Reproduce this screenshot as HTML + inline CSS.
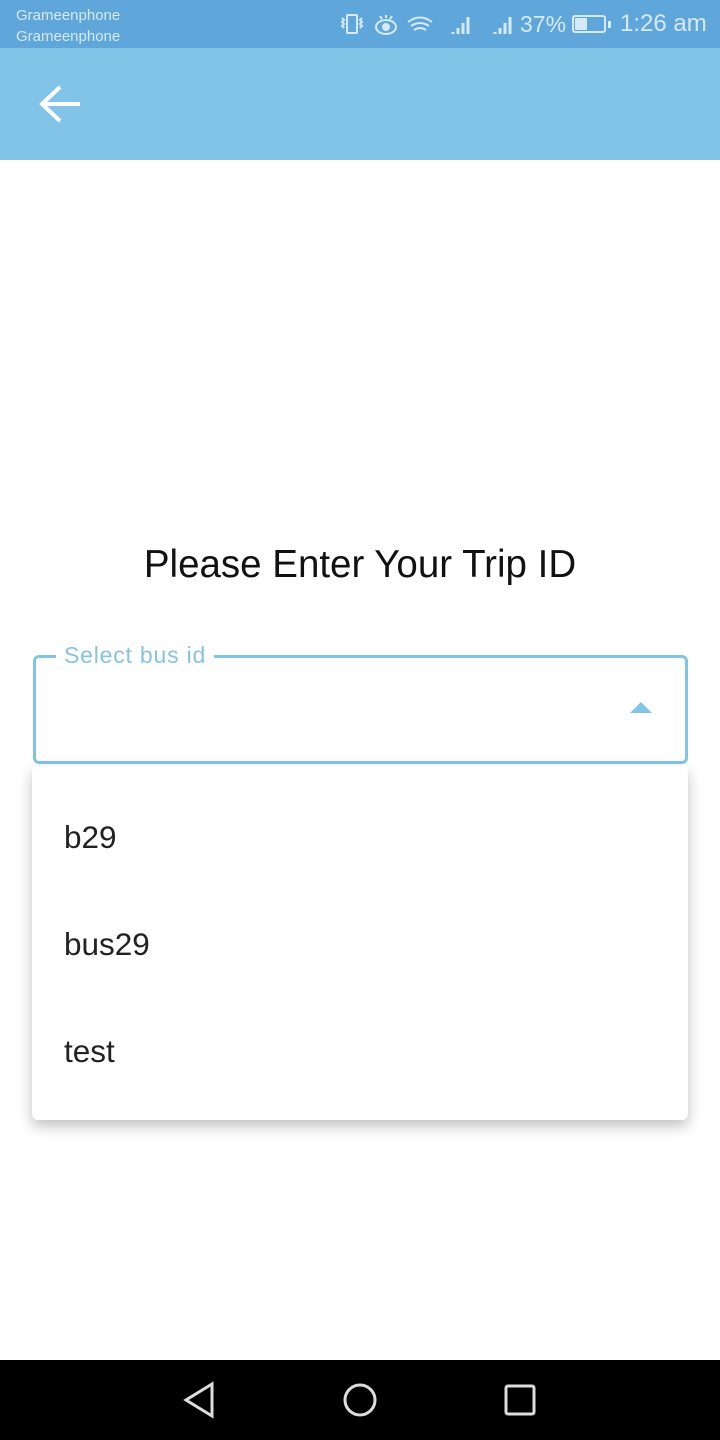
<!DOCTYPE html>
<html><head><meta charset="utf-8"><style>
*{margin:0;padding:0;box-sizing:border-box}
body{width:720px;height:1440px;position:relative;background:#fff;font-family:"Liberation Sans",sans-serif;overflow:hidden}
.sb{position:absolute;left:0;top:0;width:720px;height:48px;background:#5fa7da;color:#d6e9f7}
.ab{position:absolute;left:0;top:48px;width:720px;height:112px;background:#81c4e7}
.title{position:absolute;top:543px;width:720px;text-align:center;font-size:38.5px;color:#111}
.field{position:absolute;left:33px;top:655px;width:655px;height:109px;border:3px solid #82c4e5;border-radius:6px}
.lbl{position:absolute;left:56px;top:642px;background:#fff;padding:0 8px;font-size:23px;color:#86c3e2;letter-spacing:0.8px}
.menu{position:absolute;left:32px;top:766px;width:656px;height:354px;background:#fff;border-radius:6px;box-shadow:0 6px 14px rgba(0,0,0,0.25)}
.item{position:absolute;left:32px;font-size:31.5px;color:#222}
.nav{position:absolute;left:0;top:1360px;width:720px;height:80px;background:#000}
</style></head><body>
<div class="sb">
<div style="position:absolute;left:16px;top:5px;font-size:15px;line-height:21px">Grameenphone<br>Grameenphone</div>
<svg style="position:absolute;left:338px;top:12px" width="180" height="26" viewBox="0 0 180 26" fill="none" stroke="#d6e9f7" stroke-width="2">
<rect x="9" y="3" width="10" height="18" rx="1"/><path d="M4 6l2 2-2 2 2 2-2 2 2 2M24 6l-2 2 2 2-2 2 2 2-2 2"/>
<ellipse cx="48" cy="15" rx="10" ry="7"/><circle cx="48" cy="15" r="3" fill="#d6e9f7"/><path d="M42 4l2 3M48 3v3M54 4l-2 3"/>
<path d="M70 10q12-9 24 0M73 14q9-6 18 0M76 18q6-4 12 0"/>
<path d="M115 20v2M120 16v6M125 11v11M130 5v17" stroke-width="3"/>
<path d="M157 20v2M162 16v6M167 11v11M172 5v17" stroke-width="3"/>
</svg>
<div style="position:absolute;left:520px;top:11px;font-size:23px">37%</div>
<div style="position:absolute;left:572px;top:15px;width:34px;height:18px;border:2px solid #d6e9f7;border-radius:3px"><div style="width:12px;height:12px;margin:1px;background:#d6e9f7"></div></div>
<div style="position:absolute;left:608px;top:21px;width:3px;height:7px;background:#d6e9f7"></div>
<div style="position:absolute;left:620px;top:10px;font-size:24px">1:26 am</div>
</div>
<div class="ab">
<svg style="position:absolute;left:38px;top:36px" width="44" height="40" viewBox="0 0 44 40"><path d="M4 20H42M22 3L4 20L22 37" stroke="#fff" stroke-width="4" fill="none"/></svg>
</div>
<div class="title">Please Enter Your Trip ID</div>
<div class="field"></div>
<div class="lbl">Select bus id</div>
<svg style="position:absolute;left:630px;top:702px" width="22" height="12"><path d="M0 11L11 0L22 11Z" fill="#82c4e5"/></svg>
<div class="menu">
<div class="item" style="top:53px">b29</div>
<div class="item" style="top:160px">bus29</div>
<div class="item" style="top:267px">test</div>
</div>
<div class="nav">
<svg style="position:absolute;left:180px;top:20px" width="40" height="40"><path d="M32 4L6 20L32 36Z" fill="none" stroke="#ddd" stroke-width="3"/></svg>
<svg style="position:absolute;left:340px;top:20px" width="40" height="40"><circle cx="20" cy="20" r="15" fill="none" stroke="#ddd" stroke-width="3"/></svg>
<svg style="position:absolute;left:500px;top:20px" width="40" height="40"><rect x="6" y="6" width="28" height="28" rx="2" fill="none" stroke="#ddd" stroke-width="3"/></svg>
</div>
</body></html>
